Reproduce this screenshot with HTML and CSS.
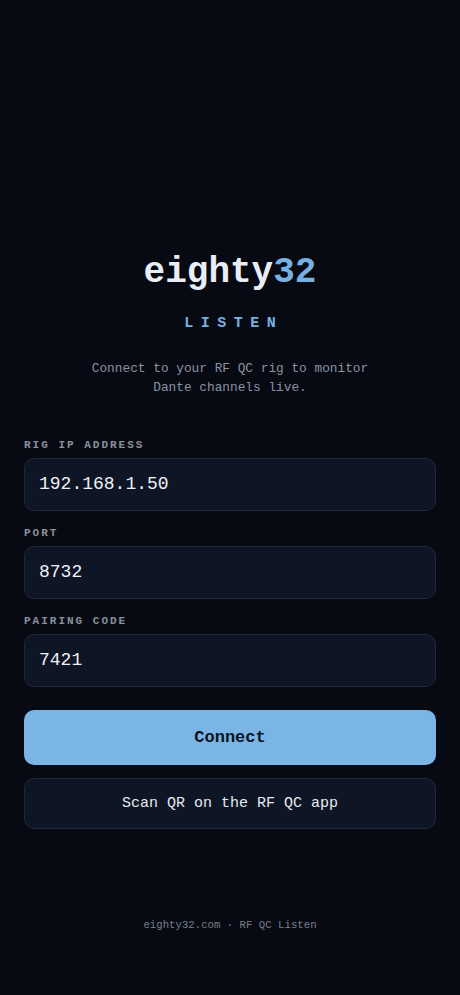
FILE: index.html
```html
<!DOCTYPE html>
<html lang="en">
<head>
<meta charset="utf-8">
<title>eighty32 Listen</title>
<link rel="stylesheet" href="styles.css">
</head>
<body>
<main class="page">
  <header class="brand">
    <h1 class="logo">eighty<span class="logo-accent">32</span></h1>
    <div class="sub">LISTEN</div>
    <p class="desc">Connect to your RF QC rig to monitor<br>Dante channels live.</p>
  </header>
  <form class="form">
    <label class="field">
      <span class="label">RIG IP ADDRESS</span>
      <input class="input" type="text" value="192.168.1.50">
    </label>
    <label class="field">
      <span class="label">PORT</span>
      <input class="input" type="text" value="8732">
    </label>
    <label class="field">
      <span class="label">PAIRING CODE</span>
      <input class="input" type="text" value="7421">
    </label>
    <button class="btn btn-primary" type="button">Connect</button>
    <button class="btn btn-secondary" type="button">Scan QR on the RF QC app</button>
  </form>
  <footer class="footer">eighty32.com · RF QC Listen</footer>
</main>
</body>
</html>
```
FILE: styles.css
```css
* { box-sizing: border-box; }
html, body {
  margin: 0;
  padding: 0;
  background: #070a12;
}
body {
  font-family: "Liberation Mono", "DejaVu Sans Mono", monospace;
  color: #e6ebf3;
}
.page {
  padding: 251px 24px 0;
  display: flex;
  flex-direction: column;
}
.brand {
  display: flex;
  flex-direction: column;
  align-items: center;
  text-align: center;
}
.logo {
  margin: 0;
  font-size: 36px;
  line-height: 44px;
  font-weight: 700;
  color: #e9eef6;
}
.logo-accent { color: #77b1e3; }
.sub {
  margin-top: 19px;
  font-size: 15px;
  line-height: 20px;
  font-weight: 700;
  letter-spacing: 7.5px;
  margin-right: -7.5px;
  color: #77b1e3;
}
.desc {
  margin: 25px 0 0;
  font-size: 12.8px;
  line-height: 19px;
  color: #8a93a2;
}
.form {
  margin-top: 41px;
  display: flex;
  flex-direction: column;
}
.field {
  display: flex;
  flex-direction: column;
  margin-bottom: 15px;
}
.label {
  font-size: 11px;
  line-height: 14px;
  font-weight: 700;
  letter-spacing: 2px;
  color: #8a919c;
  margin-bottom: 6px;
}
.input {
  height: 53px;
  width: 100%;
  border: 1px solid #1f2938;
  border-radius: 10px;
  background: #0e1524;
  padding: 0 14px 2px;
  font-family: "Liberation Mono", "DejaVu Sans Mono", monospace;
  font-size: 18px;
  color: #eef2f8;
  outline: none;
}
.btn {
  width: 100%;
  border-radius: 10px;
  font-family: "Liberation Mono", "DejaVu Sans Mono", monospace;
  cursor: pointer;
}
.btn-primary {
  margin-top: 8px;
  height: 55px;
  border: none;
  background: #7ab5e6;
  color: #0a1220;
  font-size: 17px;
  font-weight: 700;
}
.btn-secondary {
  margin-top: 13px;
  height: 51px;
  border: 1px solid #1f2938;
  background: #0e1524;
  color: #e6ebf3;
  font-size: 15px;
}
.footer {
  margin-top: 88px;
  text-align: center;
  font-size: 10.7px;
  line-height: 16px;
  color: #777f8c;
}
```
